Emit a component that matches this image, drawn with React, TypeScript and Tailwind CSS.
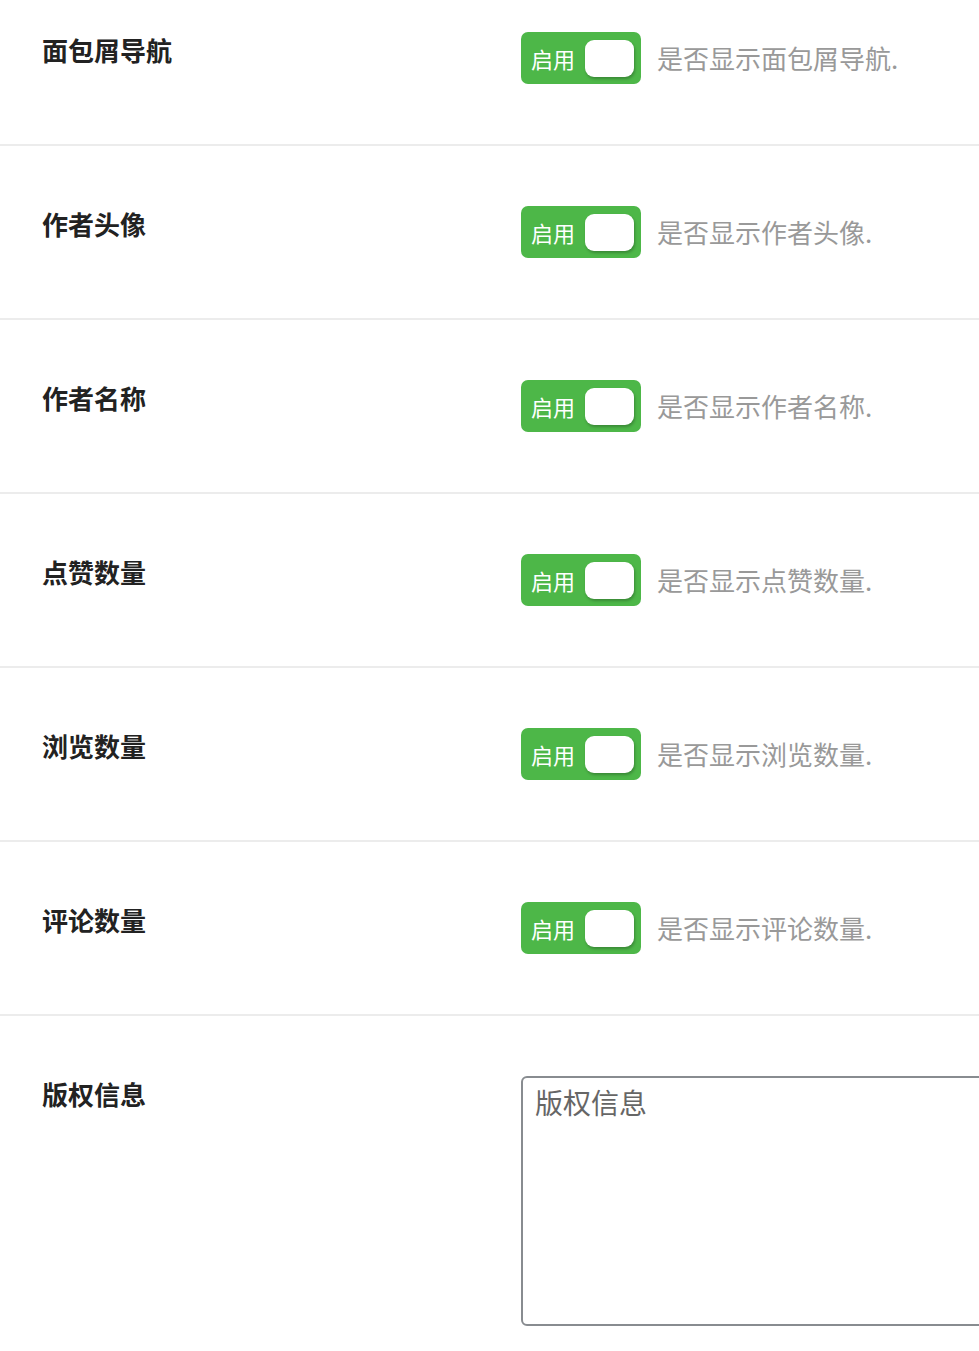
const rows = [
  { label: '面包屑导航', desc: '是否显示面包屑导航.' },
  { label: '作者头像', desc: '是否显示作者头像.' },
  { label: '作者名称', desc: '是否显示作者名称.' },
  { label: '点赞数量', desc: '是否显示点赞数量.' },
  { label: '浏览数量', desc: '是否显示浏览数量.' },
  { label: '评论数量', desc: '是否显示评论数量.' },
]

function Toggle() {
  return (
    <div className="flex items-center w-[120px] h-[52px] rounded-[7px] bg-[#4db748] pl-[10px] pr-[7px] shrink-0">
      <span className="text-[22px] leading-none text-white">启用</span>
      <span className="ml-auto w-[49px] h-[37px] rounded-[9px] bg-white shadow-[1px_2px_3px_rgba(0,0,0,0.25)]" />
    </div>
  )
}

export default function App() {
  return (
    <div
      className="w-[979px] h-[1351px] overflow-hidden bg-white text-[#222]"
      style={{ fontFamily: '"Noto Sans CJK SC", "Noto Sans", sans-serif' }}
    >
      <div className="-mt-[28px]">
        {rows.map((r) => (
          <div key={r.label} className="flex py-[60px] border-b-2 border-[#ececec]">
            <div className="w-[521px] pl-[42px] text-[26px] leading-[35px] font-bold shrink-0">{r.label}</div>
            <div className="flex items-center gap-4">
              <Toggle />
              <span className="text-[26px] leading-none text-[#999] whitespace-nowrap">{r.desc}</span>
            </div>
          </div>
        ))}
        <div className="flex pt-[60px]">
          <div className="w-[521px] pl-[42px] text-[26px] leading-[35px] font-bold shrink-0">版权信息</div>
          <textarea
            placeholder="版权信息"
            className="w-[560px] h-[250px] shrink-0 resize-none rounded-[6px] border-2 border-[#888c90] px-[12px] py-[4px] text-[28px] leading-[40px] placeholder:text-[#666] outline-none"
          />
        </div>
      </div>
    </div>
  )
}
